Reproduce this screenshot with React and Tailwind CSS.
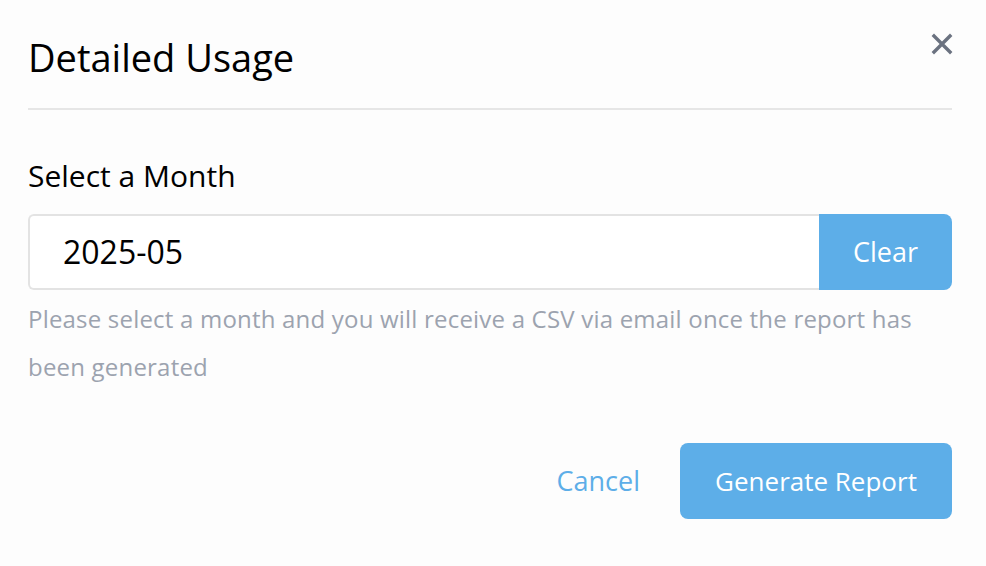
import React from "react";

const App = () => {
  return (
    <div className="min-h-screen w-full bg-[#fdfdfd] font-['Open_Sans',sans-serif] pl-[28px] pr-[34px]">
      {/* Header */}
      <div className="flex items-start justify-between pt-[37px] pb-[31px] border-b-2 border-[#e6e6e6]">
        <h2 className="text-[38px] leading-[40px] text-black">Detailed Usage</h2>
        <button className="mt-[-4px] mr-[-1px] text-[#6b7280]">
          <svg width="22" height="22" viewBox="0 0 22 22">
            <path d="M3 3L19 19M19 3L3 19" stroke="currentColor" strokeWidth="3.4" strokeLinecap="square" />
          </svg>
        </button>
      </div>

      {/* Body */}
      <div className="pt-[50px]">
        <label className="block text-[30px] leading-[32px] text-black">Select a Month</label>
        <div className="flex mt-[22px] h-[76px]">
          <div className="flex-1 flex items-center pl-[33px] border-2 border-r-0 border-[#e3e3e3] rounded-l-[6px] bg-white text-[32px] text-black">
            2025-05
          </div>
          <button className="w-[133px] bg-[#5daee8] rounded-r-[8px] text-white text-[27px]">Clear</button>
        </div>
        <p className="mt-[5px] text-[24px] tracking-[0.2px] leading-[48px] text-[#9ca3af] pr-[30px]">
          Please select a month and you will receive a CSV via email once the report has been generated
        </p>
      </div>

      {/* Footer */}
      <div className="flex items-center justify-end gap-[40px] mt-[52px]">
        <button className="text-[27px] text-[#5daee8]">Cancel</button>
        <button className="w-[272px] h-[76px] bg-[#5daee8] rounded-[8px] text-white text-[26px]">Generate Report</button>
      </div>
    </div>
  );
};

export default App;
